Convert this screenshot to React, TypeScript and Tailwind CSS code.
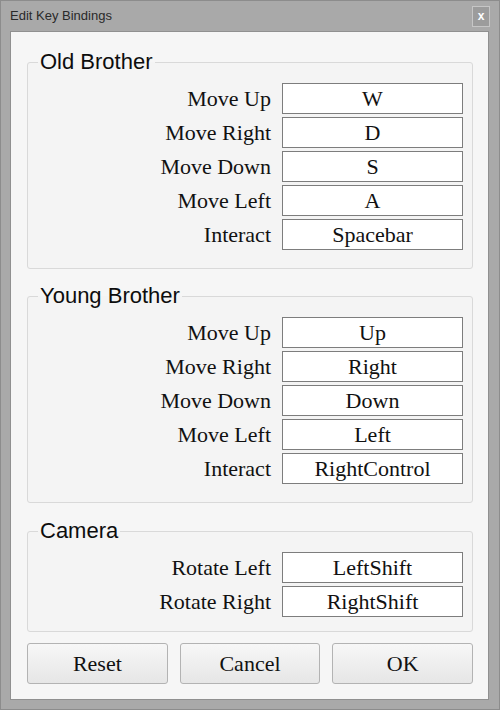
import React from "react";

const serif = { fontFamily: '"Liberation Serif", "Times New Roman", serif' };
const sans = { fontFamily: '"Liberation Sans", Arial, sans-serif' };

type Binding = { label: string; key: string };

const groups: { title: string; rows: Binding[]; pb: string; mt: string }[] = [
  {
    title: "Old Brother",
    mt: "mt-[18px]",
    pb: "pb-[18px]",
    rows: [
      { label: "Move Up", key: "W" },
      { label: "Move Right", key: "D" },
      { label: "Move Down", key: "S" },
      { label: "Move Left", key: "A" },
      { label: "Interact", key: "Spacebar" },
    ],
  },
  {
    title: "Young Brother",
    mt: "mt-[15px]",
    pb: "pb-[18px]",
    rows: [
      { label: "Move Up", key: "Up" },
      { label: "Move Right", key: "Right" },
      { label: "Move Down", key: "Down" },
      { label: "Move Left", key: "Left" },
      { label: "Interact", key: "RightControl" },
    ],
  },
  {
    title: "Camera",
    mt: "mt-[16px]",
    pb: "pb-[14px]",
    rows: [
      { label: "Rotate Left", key: "LeftShift" },
      { label: "Rotate Right", key: "RightShift" },
    ],
  },
];

function Group({ title, rows, pb, mt }: { title: string; rows: Binding[]; pb: string; mt: string }) {
  return (
    <fieldset className={`${mt} border border-[#d9d9d9] rounded-[3px] bg-[#f4f4f4] min-w-0`}>
      <legend
        className="ml-[10px] px-[2px] text-[22px] leading-[24px] text-[#0d0d0d]"
        style={sans}
      >
        {title}
      </legend>
      <div className={`flex flex-col gap-[3px] pt-[9px] ${pb} pr-[9px]`}>
        {rows.map((r) => (
          <div key={r.label} className="flex items-center justify-end gap-[11px] h-[31px]">
            <span className="text-[22px] leading-[24px] text-[#111]" style={serif}>
              {r.label}
            </span>
            <div
              className="w-[181px] h-[31px] bg-white border border-[#7d7d7d] flex items-center justify-center text-[22px] leading-[24px] text-[#111]"
              style={serif}
            >
              {r.key}
            </div>
          </div>
        ))}
      </div>
    </fieldset>
  );
}

function Btn({ children }: { children: React.ReactNode }) {
  return (
    <button
      className="h-[41px] rounded-[3px] border border-[#b3b3b3] bg-gradient-to-b from-[#f7f7f7] to-[#e6e6e6] text-[22px] leading-[24px] text-[#111] flex items-center justify-center"
      style={serif}
    >
      {children}
    </button>
  );
}

export default function App() {
  return (
    <div className="w-[500px] h-[710px] bg-[#a9a9a9] border border-[#8c8c8c] flex flex-col">
      <div className="h-[30px] flex items-center justify-between pl-[9px] pr-[9px]">
        <span className="text-[13px] text-[#2a2a2a]" style={sans}>
          Edit Key Bindings
        </span>
        <div
          className="w-[18px] h-[21px] border border-[#c6c6c6] bg-[#9c9c9c] flex items-center justify-center text-[12px] font-bold leading-none text-white"
          style={sans}
        >
          x
        </div>
      </div>
      <div className="flex-1 ml-[9px] mr-[10px] mb-[9px] border border-[#909090] bg-[#f6f6f6] pl-[16px] pr-[15px] flex flex-col">
        {groups.map((g) => (
          <Group key={g.title} {...g} />
        ))}
        <div className="grid grid-cols-3 gap-[12px] mt-[11px]">
          <Btn>Reset</Btn>
          <Btn>Cancel</Btn>
          <Btn>OK</Btn>
        </div>
      </div>
    </div>
  );
}
